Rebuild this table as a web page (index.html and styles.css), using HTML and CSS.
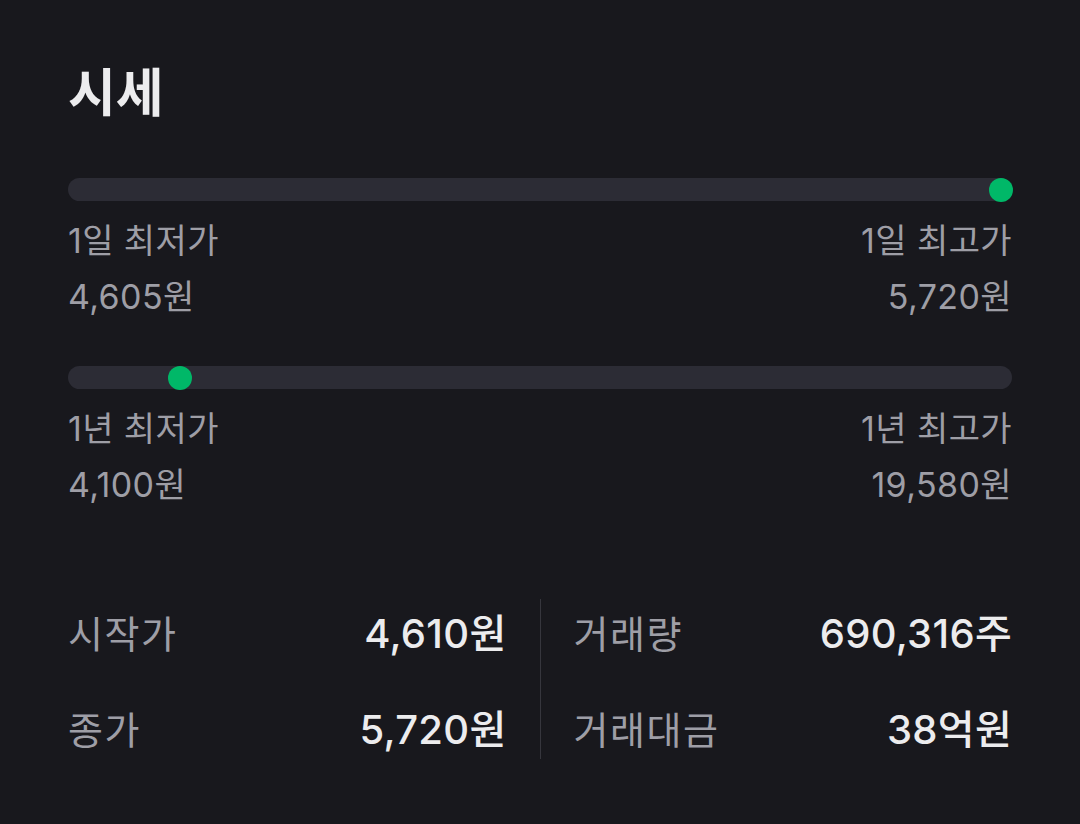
FILE: index.html
```html
<!DOCTYPE html>
<html lang="ko">
<head>
<meta charset="utf-8">
<link rel="stylesheet" href="styles.css">
</head>
<body>
<main class="page">
  <h1 class="title">시세</h1>

  <section class="range">
    <div class="track"><span class="dot" style="left: 98.83%"></span></div>
    <div class="range-row labels">
      <span>1일 최저가</span><span>1일 최고가</span>
    </div>
    <div class="range-row values">
      <span>4,605원</span><span>5,720원</span>
    </div>
  </section>

  <section class="range range-second">
    <div class="track"><span class="dot" style="left: 11.86%"></span></div>
    <div class="range-row labels">
      <span>1년 최저가</span><span>1년 최고가</span>
    </div>
    <div class="range-row values">
      <span>4,100원</span><span>19,580원</span>
    </div>
  </section>

  <section class="stats">
    <div class="stat-col">
      <div class="stat"><span class="stat-label">시작가</span><span class="stat-value">4,610원</span></div>
      <div class="stat"><span class="stat-label">종가</span><span class="stat-value">5,720원</span></div>
    </div>
    <div class="divider"></div>
    <div class="stat-col">
      <div class="stat"><span class="stat-label">거래량</span><span class="stat-value">690,316주</span></div>
      <div class="stat"><span class="stat-label">거래대금</span><span class="stat-value">38억원</span></div>
    </div>
  </section>
</main>
</body>
</html>
```

FILE: styles.css
```css
* { box-sizing: border-box; }
html, body {
  margin: 0;
  padding: 0;
  background: #18181d;
}
body {
  font-family: Inter, "Noto Sans CJK KR", "Noto Sans", sans-serif;
  color: #e8e8ea;
}
.page {
  padding: 62px 68px 0 68px;
  display: flex;
  flex-direction: column;
}
.title {
  margin: 0;
  font-size: 52px;
  line-height: 64px;
  font-weight: 700;
  color: #ececee;
}
.range {
  margin-top: 52px;
  display: flex;
  flex-direction: column;
}
.range-second {
  margin-top: 41px;
}
.track {
  position: relative;
  height: 23px;
  border-radius: 12px;
  background: #2c2c35;
}
.dot {
  position: absolute;
  top: 50%;
  width: 24px;
  height: 24px;
  border-radius: 50%;
  background: #00b868;
  transform: translate(-50%, -50%);
}
.range-row {
  display: flex;
  justify-content: space-between;
  color: #9e9ea6;
  font-size: 34px;
  letter-spacing: 0.4px;
}
.labels {
  margin-top: 16px;
  line-height: 48px;
}
.values {
  margin-top: 4px;
  line-height: 56px;
}
.stats {
  margin-top: 86px;
  display: grid;
  grid-template-columns: 1fr 1px 1fr;
  column-gap: 33px;
}
.stat-col {
  display: flex;
  flex-direction: column;
  gap: 32px;
}
.stat {
  height: 64px;
  display: flex;
  align-items: center;
  justify-content: space-between;
}
.stat-label {
  font-size: 38px;
  letter-spacing: 1.5px;
  color: #9e9ea6;
}
.stat-value {
  font-size: 40px;
  font-weight: 500;
  letter-spacing: 0.3px;
  color: #ececee;
}
.divider {
  background: #36363d;
  width: 1px;
}
```
